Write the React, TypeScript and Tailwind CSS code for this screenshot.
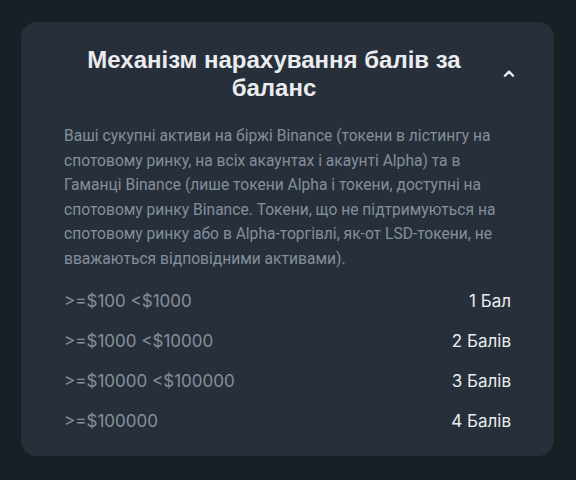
const rows = [
  { range: ">=$100 <$1000", points: "1 Бал" },
  { range: ">=$1000 <$10000", points: "2 Балів" },
  { range: ">=$10000 <$100000", points: "3 Балів" },
  { range: ">=$100000", points: "4 Балів" },
];

export default function App() {
  return (
    <div className="min-h-[480px] w-[576px] bg-[#181f25] pt-[22px] pl-[21px] pr-[22px]">
      <div className="rounded-2xl bg-[#27303a] px-[43px] pt-[24px] pb-[23px]">
        {/* Header */}
        <div className="flex items-center">
          <h2 className="flex-1 text-center text-[24px] leading-[28px] font-bold text-[#eaecef] font-['Liberation_Sans',Arial,sans-serif] pr-[6px]">
            Механізм нарахування балів за
            <br />
            баланс
          </h2>
          <svg className="w-[14px] h-[14px] text-[#eaecef] mr-[-5px] ml-[12px]" viewBox="0 0 24 24" fill="none" stroke="currentColor">
            <path strokeLinecap="round" strokeLinejoin="round" strokeWidth="4" d="M5 15l7-7 7 7" />
          </svg>
        </div>

        {/* Description */}
        <p className="mt-[22px] text-[15.6px] leading-[24.5px] text-[#848e9c] font-['Roboto','Noto_Sans',sans-serif] whitespace-nowrap">
          Ваші сукупні активи на біржі Binance (токени в лістингу на
          <br />
          спотовому ринку, на всіх акаунтах і акаунті Alpha) та в
          <br />
          Гаманці Binance (лише токени Alpha і токени, доступні на
          <br />
          спотовому ринку Binance. Токени, що не підтримуються на
          <br />
          спотовому ринку або в Alpha-торгівлі, як-от LSD-токени, не
          <br />
          вважаються відповідними активами).
        </p>

        {/* Tiers */}
        <div className="mt-[18px] flex flex-col gap-[16px] font-['Inter','Noto_Sans',sans-serif] text-[17px] leading-[24px]">
          {rows.map((r) => (
            <div key={r.range} className="flex justify-between">
              <span className="text-[#848e9c]">{r.range}</span>
              <span className="text-[#eaecef]">{r.points}</span>
            </div>
          ))}
        </div>
      </div>
    </div>
  );
}
